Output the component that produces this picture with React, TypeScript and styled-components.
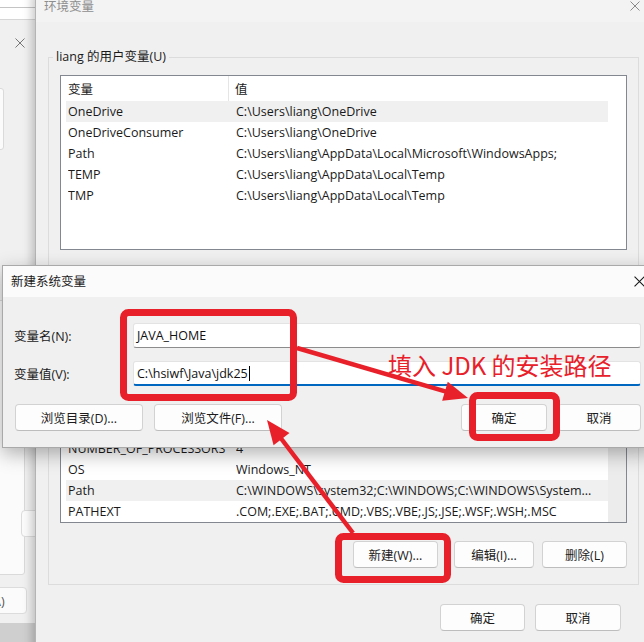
import React from "react";
import styled, { createGlobalStyle } from "styled-components";

const uiFont = `"Open Sans", "Noto Sans CJK SC", sans-serif`;
const red = "#e8202a";

const GlobalStyle = createGlobalStyle`
  html, body {
    margin: 0;
    padding: 0;
  }
  body {
    width: 644px;
    height: 642px;
    overflow: hidden;
    font-family: ${uiFont};
    font-size: 12.5px;
    color: #1a1a1a;
  }
`;

const Desktop = styled.div`
  position: relative;
  width: 644px;
  height: 642px;
  overflow: hidden;
  background: #cfcfcf;
`;

/* ---------- window left behind everything ---------- */

const TopStrip = styled.div`
  position: absolute;
  left: 0;
  top: 0;
  width: 60px;
  height: 20px;
  background: #fff;
  border-bottom: 1px solid #d6d6d6;
  box-sizing: border-box;

  &::after {
    content: "";
    display: block;
    margin-top: 7px;
    border-top: 1px solid #c4c4c4;
  }
`;

const BackWindow = styled.div`
  position: absolute;
  left: -300px;
  top: 20px;
  width: 343px;
  height: 603px;
  background: #f0f0f0;
  display: flex;
  flex-direction: column;
`;

const BackTitle = styled.div`
  height: 46px;
  display: flex;
  align-items: center;
  justify-content: flex-end;
  padding-right: 18px;
  flex-shrink: 0;
`;

const BackPanel = styled.div<{ $top: number; $height: number; $right: number }>`
  margin-top: ${(p) => p.$top}px;
  margin-right: ${(p) => p.$right}px;
  height: ${(p) => p.$height}px;
  box-sizing: border-box;
  background: #fbfbfb;
  border: 1px solid #dadada;
  border-radius: 3px;
  display: flex;
  flex-direction: column;
  align-items: flex-end;
  flex-shrink: 0;
`;

const BackButton = styled.div<{ $top: number; $right: number }>`
  margin-top: ${(p) => p.$top}px;
  margin-right: ${(p) => p.$right}px;
  align-self: flex-end;
  width: 85px;
  height: 27px;
  border: 1px solid #dcdcdc;
  border-radius: 4px;
  background: #fbfbfb;
  display: flex;
  align-items: center;
  justify-content: center;
  color: #555;
  flex-shrink: 0;
  box-sizing: border-box;
`;

/* ---------- 环境变量 window ---------- */

const EnvWindow = styled.div`
  position: absolute;
  left: 35px;
  top: -8px;
  width: 616px;
  height: 690px;
  background: #f0f0f0;
  border-left: 1px solid #b4b4b4;
  box-shadow: -3px 0 9px rgba(0, 0, 0, 0.22);
  display: flex;
  flex-direction: column;
`;

const TitleBar = styled.div<{ $height: number; $bg: string; $color: string; $pl: number }>`
  height: ${(p) => p.$height}px;
  background: ${(p) => p.$bg};
  color: ${(p) => p.$color};
  padding-left: ${(p) => p.$pl}px;
  display: flex;
  align-items: center;
  justify-content: space-between;
  flex-shrink: 0;
`;

const TitleText = styled.span<{ $shift?: number }>`
  position: relative;
  top: ${(p) => p.$shift ?? 0}px;
`;

const CloseBox = styled.span<{ $shift?: number; $pr: number }>`
  display: flex;
  padding-right: ${(p) => p.$pr}px;
  position: relative;
  top: ${(p) => p.$shift ?? 0}px;
`;

const EnvBody = styled.div`
  padding: 26px 13px 0 12px;
  display: flex;
  flex-direction: column;
`;

const GroupBox = styled.fieldset<{ $mt?: number }>`
  margin: ${(p) => p.$mt ?? 0}px 0 0 0;
  padding: 9px 11px 16px 11px;
  border: 1px solid #dcdcdc;
  min-width: 0;
`;

const Legend = styled.legend`
  padding: 0 3px;
  margin-left: -7px;
  line-height: 18px;
`;

const ListBox = styled.div<{ $height: number }>`
  height: ${(p) => p.$height}px;
  box-sizing: border-box;
  border: 1px solid #828790;
  background: #fff;
  display: flex;
  flex-direction: column;
  overflow: hidden;
`;

const ListHeader = styled.div`
  display: grid;
  grid-template-columns: 163px 1fr;
  height: 25px;
  margin: 0 18px 0 5px;
  flex-shrink: 0;
`;

const HeaderCell = styled.div<{ $divider?: boolean; $pl: number }>`
  display: flex;
  align-items: center;
  padding-left: ${(p) => p.$pl}px;
  border-right: ${(p) => (p.$divider ? "1px solid #e5e5e5" : "none")};
`;

const ListMain = styled.div`
  flex: 1;
  display: flex;
  min-height: 0;
`;

const RowsArea = styled.div<{ $fromBottom?: boolean }>`
  flex: 1;
  min-width: 0;
  padding-left: 5px;
  display: flex;
  flex-direction: column;
  justify-content: ${(p) => (p.$fromBottom ? "flex-end" : "flex-start")};
  overflow: hidden;
`;

const ScrollTrack = styled.div<{ $shown?: boolean }>`
  width: 18px;
  flex-shrink: 0;
  background: ${(p) => (p.$shown ? "#ececec" : "transparent")};
`;

const Row = styled.div<{ $selected?: boolean }>`
  display: grid;
  grid-template-columns: 168px 1fr;
  height: 21px;
  flex-shrink: 0;
  align-items: center;
  padding-left: 2px;
  background: ${(p) => (p.$selected ? "#f0f0f0" : "transparent")};
  white-space: nowrap;
`;

const Cell = styled.span`
  overflow: hidden;
`;

const ButtonRow = styled.div<{ $mt: number; $pr?: number }>`
  display: flex;
  justify-content: flex-end;
  margin-top: ${(p) => p.$mt}px;
  padding-right: ${(p) => p.$pr ?? 0}px;
`;

const Button = styled.button<{ $w: number; $gap?: number }>`
  width: ${(p) => p.$w}px;
  height: 27px;
  margin-left: ${(p) => p.$gap ?? 0}px;
  padding: 0;
  background: #fdfdfd;
  border: 1px solid #d2d2d2;
  border-bottom-color: #bdbdbd;
  border-radius: 4px;
  font-family: ${uiFont};
  font-size: 12.5px;
  color: #1b1b1b;
  flex-shrink: 0;
`;

/* ---------- 新建系统变量 dialog ---------- */

const Dialog = styled.div`
  position: absolute;
  left: 2px;
  top: 265px;
  width: 650px;
  background: #f0f0f0;
  border: 1px solid #a9a9a9;
  box-shadow: 0 6px 18px rgba(0, 0, 0, 0.3);
`;

const DialogBody = styled.div`
  padding: 26px 12px 16px 11px;
  display: flex;
  flex-direction: column;
  gap: 13px;
`;

const Field = styled.label`
  display: grid;
  grid-template-columns: 119px 1fr;
  align-items: center;
`;

const Input = styled.div<{ $focused?: boolean }>`
  height: 25px;
  box-sizing: border-box;
  background: #fff;
  border: 1px solid #e3e3e3;
  border-bottom: ${(p) => (p.$focused ? "2px solid #0067c0" : "1px solid #8c8c8c")};
  border-radius: 3px;
  padding-left: 3px;
  display: flex;
  align-items: center;
  color: #111;
`;

const Caret = styled.span`
  display: inline-block;
  width: 1px;
  height: 15px;
  margin-left: 1px;
  background: #000;
`;

const DialogButtons = styled.div`
  display: flex;
  justify-content: space-between;
  margin-top: 5px;
  padding-left: 1px;
`;

const ButtonGroup = styled.div`
  display: flex;
`;

/* ---------- red markup on top ---------- */

const Markup = styled.svg`
  position: absolute;
  left: 0;
  top: 0;
  width: 644px;
  height: 642px;
  pointer-events: none;
`;

const Note = styled.div`
  position: absolute;
  left: 388px;
  top: 350px;
  font-family: "Noto Sans CJK SC", sans-serif;
  font-size: 24px;
  line-height: 30px;
  color: ${red};
  white-space: nowrap;
`;

function CloseIcon({ color, size = 10 }: { color: string; size?: number }) {
  return (
    <svg width={size} height={size} viewBox="0 0 10 10">
      <path d="M0.5 0.5 L9.5 9.5 M9.5 0.5 L0.5 9.5" stroke={color} strokeWidth="1" fill="none" />
    </svg>
  );
}

function Arrow({ from, to }: { from: [number, number]; to: [number, number] }) {
  const [x1, y1] = from;
  const [x2, y2] = to;
  const len = Math.hypot(x2 - x1, y2 - y1);
  const ux = (x2 - x1) / len;
  const uy = (y2 - y1) / len;
  const head = 24;
  const half = 10;
  const bx = x2 - ux * head;
  const by = y2 - uy * head;
  const pts = [
    [x2, y2],
    [bx - uy * half, by + ux * half],
    [bx + uy * half, by - ux * half],
  ]
    .map((p) => p.join(","))
    .join(" ");
  return (
    <g>
      <line x1={x1} y1={y1} x2={bx + ux * 2} y2={by + uy * 2} stroke={red} strokeWidth="4.5" />
      <polygon points={pts} fill={red} />
    </g>
  );
}

type EnvVar = { name: string; value: string; selected?: boolean };

const userVars: EnvVar[] = [
  { name: "OneDrive", value: "C:\\Users\\liang\\OneDrive", selected: true },
  { name: "OneDriveConsumer", value: "C:\\Users\\liang\\OneDrive" },
  { name: "Path", value: "C:\\Users\\liang\\AppData\\Local\\Microsoft\\WindowsApps;" },
  { name: "TEMP", value: "C:\\Users\\liang\\AppData\\Local\\Temp" },
  { name: "TMP", value: "C:\\Users\\liang\\AppData\\Local\\Temp" },
];

// list is scrolled to its end, rows stack from the bottom
const systemVars: EnvVar[] = [
  { name: "NUMBER_OF_PROCESSORS", value: "4" },
  { name: "OS", value: "Windows_NT" },
  { name: "Path", value: "C:\\WINDOWS\\system32;C:\\WINDOWS;C:\\WINDOWS\\System...", selected: true },
  { name: "PATHEXT", value: ".COM;.EXE;.BAT;.CMD;.VBS;.VBE;.JS;.JSE;.WSF;.WSH;.MSC" },
];

function VarList({ vars, height, scrolled }: { vars: EnvVar[]; height: number; scrolled?: boolean }) {
  return (
    <ListBox $height={height}>
      <ListHeader>
        <HeaderCell $divider $pl={2}>变量</HeaderCell>
        <HeaderCell $pl={6}>值</HeaderCell>
      </ListHeader>
      <ListMain>
        <RowsArea $fromBottom={scrolled}>
          {vars.map((v) => (
            <Row key={v.name} $selected={v.selected}>
              <Cell>{v.name}</Cell>
              <Cell>{v.value}</Cell>
            </Row>
          ))}
        </RowsArea>
        <ScrollTrack $shown={scrolled} />
      </ListMain>
    </ListBox>
  );
}

export default function App() {
  return (
    <Desktop>
      <GlobalStyle />

      <TopStrip />
      <BackWindow>
        <BackTitle>
          <CloseIcon color="#777" />
        </BackTitle>
        <BackPanel $top={22} $height={62} $right={39} />
        <BackPanel $top={150} $height={275} $right={18}>
          <BackButton $top={209} $right={-82} />
        </BackPanel>
        <BackButton $top={12} $right={16}>应用(A)</BackButton>
      </BackWindow>

      <EnvWindow>
        <TitleBar $height={30} $bg="#f3f3f3" $color="#8e8e8e" $pl={8}>
          <TitleText $shift={-2}>环境变量</TitleText>
          <CloseBox $pr={12} $shift={-1}>
            <CloseIcon color="#8a8a8a" />
          </CloseBox>
        </TitleBar>
        <EnvBody>
          <GroupBox>
            <Legend>liang 的用户变量(U)</Legend>
            <VarList vars={userVars} height={175} />
            <ButtonRow $mt={18}>
              <Button $w={85}>新建(N)...</Button>
              <Button $w={80} $gap={16}>编辑(E)...</Button>
              <Button $w={85} $gap={8}>删除(D)</Button>
            </ButtonRow>
          </GroupBox>
          <GroupBox $mt={8}>
            <Legend>系统变量(S)</Legend>
            <VarList vars={systemVars} height={176} scrolled />
            <ButtonRow $mt={18}>
              <Button $w={85}>新建(W)...</Button>
              <Button $w={80} $gap={16}>编辑(I)...</Button>
              <Button $w={85} $gap={8}>删除(L)</Button>
            </ButtonRow>
          </GroupBox>
          <ButtonRow $mt={19} $pr={18}>
            <Button $w={85}>确定</Button>
            <Button $w={86} $gap={10}>取消</Button>
          </ButtonRow>
        </EnvBody>
      </EnvWindow>

      <Dialog>
        <TitleBar $height={31} $bg="#fbfbfb" $color="#1a1a1a" $pl={8}>
          <TitleText $shift={-1}>新建系统变量</TitleText>
          <CloseBox $pr={8}>
            <CloseIcon color="#1a1a1a" size={11} />
          </CloseBox>
        </TitleBar>
        <DialogBody>
          <Field>
            <span>变量名(N):</span>
            <Input>JAVA_HOME</Input>
          </Field>
          <Field>
            <span>变量值(V):</span>
            <Input $focused>
              C:\hsiwf\Java\jdk25
              <Caret />
            </Input>
          </Field>
          <DialogButtons>
            <ButtonGroup>
              <Button $w={128}>浏览目录(D)...</Button>
              <Button $w={128} $gap={11}>浏览文件(F)...</Button>
            </ButtonGroup>
            <ButtonGroup>
              <Button $w={86}>确定</Button>
              <Button $w={84} $gap={10}>取消</Button>
            </ButtonGroup>
          </DialogButtons>
        </DialogBody>
      </Dialog>

      <Markup viewBox="0 0 644 642">
        <rect x="123.5" y="312.5" width="170" height="85" rx="5" fill="none" stroke={red} strokeWidth="7" />
        <rect x="472.5" y="395.5" width="84" height="42" rx="5" fill="none" stroke={red} strokeWidth="7" />
        <rect x="338.5" y="536.5" width="109" height="43" rx="5" fill="none" stroke={red} strokeWidth="7" />
        <Arrow from={[297, 348]} to={[468, 398]} />
        <Arrow from={[353, 533]} to={[267, 420]} />
      </Markup>
      <Note>填入 JDK 的安装路径</Note>
    </Desktop>
  );
}
